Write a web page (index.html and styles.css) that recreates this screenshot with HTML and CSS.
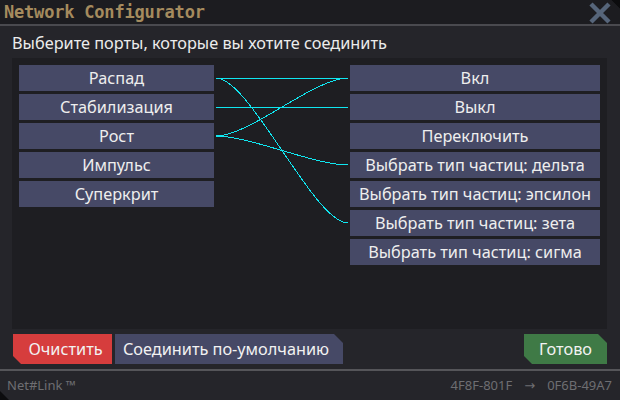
FILE: index.html
```html
<!DOCTYPE html>
<html lang="ru">
<head>
<meta charset="UTF-8">
<meta name="viewport" content="width=device-width, initial-scale=1.0">
<title>Network Configurator</title>
<link rel="stylesheet" href="styles.css">
</head>
<body>
<div class="window">
  <div class="titlebar">
    <span class="title">Network Configurator</span>
    <svg class="close" width="24" height="22" viewBox="0 0 24 22">
      <path d="M3 2 L21 20 M21 2 L3 20" stroke="#56657a" stroke-width="4.5" fill="none"/>
    </svg>
  </div>

  <div class="prompt">Выберите порты, которые вы хотите соединить</div>

  <div class="board">
    <div class="ports">
      <div class="port">Распад</div>
      <div class="port">Стабилизация</div>
      <div class="port">Рост</div>
      <div class="port">Импульс</div>
      <div class="port">Суперкрит</div>
    </div>

    <!-- links between ports, rows are 29px apart -->
    <svg class="links" width="136" height="200" viewBox="0 0 136 200" shape-rendering="crispEdges">
      <path d="M2 13 H134"/>
      <path d="M2 13 C36 13 100 158 134 158"/>
      <path d="M2 42 H134"/>
      <path d="M2 71 C36 71 100 13 134 13"/>
      <path d="M2 71 C36 71 100 100 134 100"/>
    </svg>

    <div class="ports ports-right">
      <div class="port">Вкл</div>
      <div class="port">Выкл</div>
      <div class="port">Переключить</div>
      <div class="port">Выбрать тип частиц: дельта</div>
      <div class="port">Выбрать тип частиц: эпсилон</div>
      <div class="port">Выбрать тип частиц: зета</div>
      <div class="port">Выбрать тип частиц: сигма</div>
    </div>
  </div>

  <div class="actions">
    <button class="btn btn-clear">Очистить</button>
    <button class="btn btn-default">Соединить по-умолчанию</button>
    <button class="btn btn-done">Готово</button>
  </div>

  <div class="footer">
    <span>Net#Link ™</span>
    <span class="route">4F8F-801F<span class="arrow">→</span>0F6B-49A7</span>
  </div>
</div>
</body>
</html>
```

FILE: styles.css
```css
body {
  margin: 0;
  background-color: #0c0c0e;
  font-family: "Noto Sans", "Open Sans", sans-serif;
}
.window {
  width: 620px;
  height: 400px;
  background-color: #25252a;
  display: flex;
  flex-direction: column;
  clip-path: polygon(0 0, calc(100% - 9px) 0, 100% 9px, 100% 100%, 9px 100%, 0 calc(100% - 9px));
}
.titlebar {
  height: 24px;
  background-color: #1c1c20;
  border-bottom: 2px solid #4a4a4f;
  display: flex;
  align-items: center;
  justify-content: space-between;
  padding: 0 8px 0 4px;
}
.title {
  font-family: "DejaVu Sans Mono", monospace;
  font-weight: bold;
  font-size: 17px;
  letter-spacing: -0.2px;
  color: #a58b5e;
}
.close {
  margin-top: 2px;
}
.prompt {
  height: 32px;
  line-height: 34px;
  padding-left: 12px;
  font-size: 16.3px;
  color: #ececec;
}
.board {
  height: 257px;
  margin: 0 13px 0 12px;
  padding: 7px;
  background-color: #1e1e22;
  display: flex;
  align-items: flex-start;
}
.ports {
  width: 195px;
  display: flex;
  flex-direction: column;
  gap: 3px;
}
.ports-right {
  width: 250px;
}
.port {
  height: 26px;
  line-height: 26px;
  background-color: #464966;
  color: #eeeeee;
  font-size: 16.3px;
  text-align: center;
  white-space: nowrap;
}
.links {
  display: block;
  flex: none;
}
.links path {
  fill: none;
  stroke: #10e6f0;
  stroke-width: 1;
}
.actions {
  display: flex;
  align-items: center;
  gap: 3px;
  margin: 5px 13px 0 13px;
}
.btn {
  height: 30px;
  border: none;
  padding: 0;
  font-family: inherit;
  font-size: 16.3px;
  color: #f2f2f2;
  cursor: pointer;
}
.btn-clear {
  width: 99px;
  padding-left: 6px;
  background-color: #d63d3d;
  clip-path: polygon(0 0, 100% 0, 100% 100%, 8px 100%, 0 calc(100% - 8px));
}
.btn-default {
  width: 228px;
  padding-right: 6px;
  background-color: #464966;
  clip-path: polygon(0 0, calc(100% - 9px) 0, 100% 9px, 100% 100%, 0 100%);
}
.btn-done {
  width: 83px;
  margin-left: auto;
  background-color: #3f7a46;
  clip-path: polygon(0 0, calc(100% - 9px) 0, 100% 9px, 100% 100%, 8px 100%, 0 calc(100% - 8px));
}
.footer {
  margin-top: 5px;
  border-top: 2px solid #555559;
  flex: 1;
  display: flex;
  align-items: center;
  justify-content: space-between;
  padding: 0 8px 2px 7px;
  font-size: 13px;
  color: #6e6e72;
}
.arrow {
  margin: 0 12px;
  font-family: "DejaVu Sans", sans-serif;
  font-size: 13px;
}
```
